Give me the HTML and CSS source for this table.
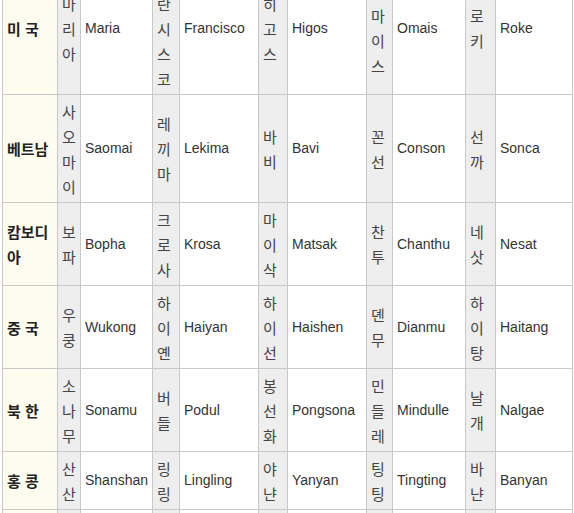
FILE: index.html
```html
<!DOCTYPE html>
<html lang="ko">
<head>
<meta charset="utf-8">
<link rel="stylesheet" href="styles.css">
</head>
<body>
<div class="names">
  <div class="c">미 국</div><div class="k">마리아</div><div class="r">Maria</div><div class="k">프란시스코</div><div class="r">Francisco</div><div class="k">히고스</div><div class="r">Higos</div><div class="k">오마이스</div><div class="r">Omais</div><div class="k">로키</div><div class="r">Roke</div>
  <div class="c">베트남</div><div class="k">사오마이</div><div class="r">Saomai</div><div class="k">레끼마</div><div class="r">Lekima</div><div class="k">바비</div><div class="r">Bavi</div><div class="k">꼰선</div><div class="r">Conson</div><div class="k">선까</div><div class="r">Sonca</div>
  <div class="c">캄보디아</div><div class="k">보파</div><div class="r">Bopha</div><div class="k">크로사</div><div class="r">Krosa</div><div class="k">마이삭</div><div class="r">Matsak</div><div class="k">찬투</div><div class="r">Chanthu</div><div class="k">네삿</div><div class="r">Nesat</div>
  <div class="c">중 국</div><div class="k">우쿵</div><div class="r">Wukong</div><div class="k">하이옌</div><div class="r">Haiyan</div><div class="k">하이선</div><div class="r">Haishen</div><div class="k">뎬무</div><div class="r">Dianmu</div><div class="k">하이탕</div><div class="r">Haitang</div>
  <div class="c">북 한</div><div class="k">소나무</div><div class="r">Sonamu</div><div class="k">버들</div><div class="r">Podul</div><div class="k">봉선화</div><div class="r">Pongsona</div><div class="k">민들레</div><div class="r">Mindulle</div><div class="k">날개</div><div class="r">Nalgae</div>
  <div class="c">홍 콩</div><div class="k">산산</div><div class="r">Shanshan</div><div class="k">링링</div><div class="r">Lingling</div><div class="k">야냔</div><div class="r">Yanyan</div><div class="k">팅팅</div><div class="r">Tingting</div><div class="k">바냔</div><div class="r">Banyan</div>
  <div class="c">일 본</div><div class="k">야기</div><div class="r">Yagi</div><div class="k">가지키</div><div class="r">Kajiki</div><div class="k">구지라</div><div class="r">Kujira</div><div class="k">곳푸</div><div class="r">Koppu</div><div class="k">도카게</div><div class="r">Tokage</div>
</div>
</body>
</html>
```
FILE: styles.css
```css
html, body {
  margin: 0;
  padding: 0;
  background: #fff;
}

body {
  font-family: "Liberation Sans", Arial, "Noto Sans CJK KR", sans-serif;
  font-size: 14px;
  color: #333;
  overflow: hidden;
}

.names {
  display: grid;
  grid-template-columns: 54px 22px 71px 26px 78px 28px 78px 25px 72px 29px 76px;
  gap: 1px;
  padding: 1px;
  background: #c8c8c8;
  width: max-content;
  margin: -39px 0 0 2px;
}

.names > div {
  display: flex;
  align-items: center;
  padding: 3.5px 4px;
  line-height: 25px;
  min-width: 0;
}

.c {
  background: #fefcee;
  font-weight: bold;
  color: #222;
  font-size: 15px;
  font-family: "Noto Sans CJK KR", sans-serif;
}

.k {
  background: #eeeeee;
  color: #444;
  font-size: 15px;
  font-family: "Noto Sans CJK KR", sans-serif;
}

.r {
  background: #fff;
}
```
